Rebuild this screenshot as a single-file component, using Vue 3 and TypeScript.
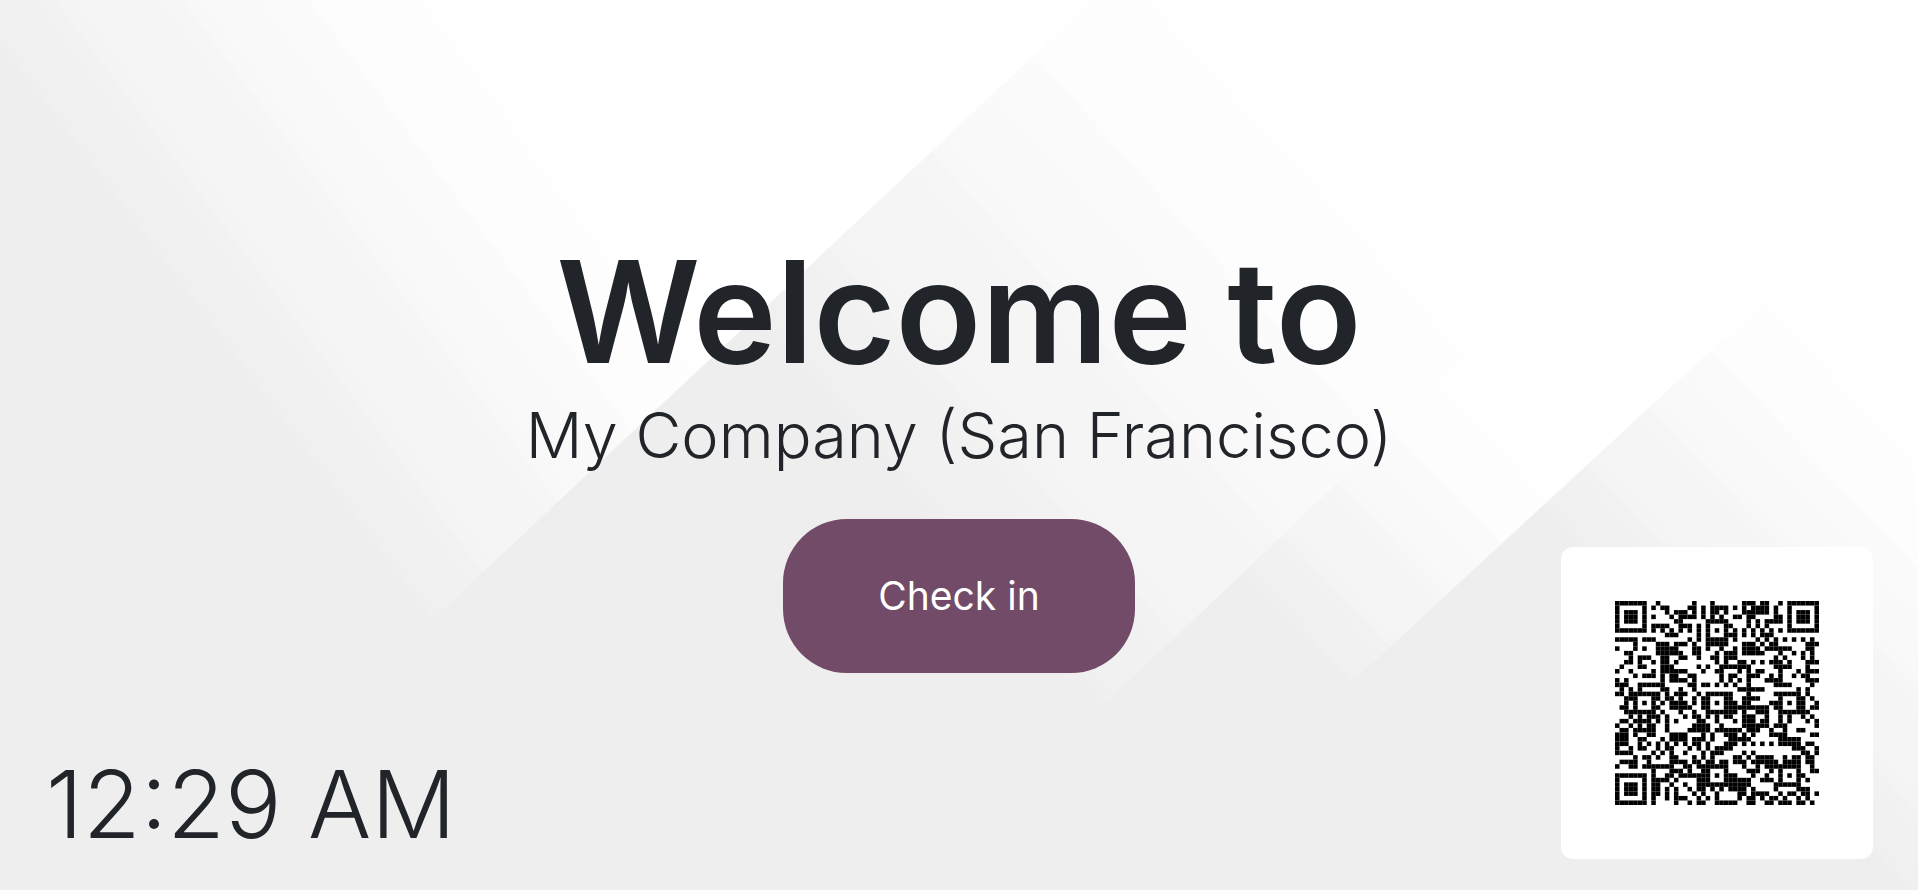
<script setup lang="ts">
interface Cell {
  x: number
  y: number
}

const company = 'My Company (San Francisco)'
const time = '12:29 AM'

const size = 45

// Dark modules of each row, written as single columns and column ranges.
const rows: string[] = [
  '9 17 21 28-30 32-33 36',
  '8 10-11 16-17 19 21-24 26 28 30-33 35',
  '11 13-15 17 19 21-22 24 28-33 35',
  '8 12 14-17 19 21 23 26-27 29-30 35-36',
  '13-14 29 31 33-36',
  '8-11 14-16 18 25 29 31 33',
  '',
  '11-13 18 25-26 28 30 32-34',
  '0-4 7-8 16 18 20-24 26 31 33 35 37 39 41 43',
  '4 9-11 13-15 17 20-24 28-30 32 34-35 42-44',
  '0 4 9-13 17-18 20 23 26 28-31 33-38 42-43',
  '2-3 9-14 17-18 22 24-26 28-32 36 39 41 43',
  '3 5-7 10-11 14-15 18 21-22 24-26 35 37 41 43',
  '2-3 5 8 10-11 13 22 24 27-28 30 32 34-36 38 42-44',
  '1 5 10-12 18 20 23-26 27-29 35-38 42',
  '0 3 8 10-15 19 22-23 27 29 31-32 36 40 42-44',
  '4 7-8 10 12-13 16-17 23 25-26 29-31 34 36 39 41-42',
  '0 2 10 12-15 17 23 25 27 29 33-36 42-44',
  '0-2 5-10 16-17 19-20 22 24 26 29 35-38 43',
  '1 3 5 10-11 14 17 27-32 40 42',
  '0-1 3 9 11 13-15 18 25 29 35 42',
  '2-3 9 11-12 14 17 19 25 28-29 30-31 41 43',
  '2 10 12-15 17 19 25-26 28-29 34-35 41 44',
  '1-2 9 12-16 19 25-33 35 41 43-44',
  '2-3 10 14 17 25-26 28 31-33 41-42',
  '3 5 7-9 11 15 17-18 20 22 24-25 28-30 33 36 38 41 43',
  '1-2 4-7 9 11 13 18-19 22 26 28-30 32-33 36 38 42 44',
  '0 3 5-8 11 17-20 23 28-33 35-37 44',
  '1-2 4-8 11 16-20 22-27 29-31 34 37 40-41',
  '0-2 4 7-8 12-15 19 21 24-26 28 30 34-37 43-44',
  '0-2 5-6 10 12-15 17-19 21 25-29 36-40',
  '0-2 5 7 9 11 13 15 17-18 20 24-26 28 30 32 34 36-40 42-43',
  '0 3 5 9 11-12 16 18 20 22-25 39-41 44',
  '0-3 8 10 12 15 19 21-23 28 30 41-42 44',
  '4 7 9 12-13 17 19 21 26-27 29 31-34 37 39-40 42-43',
  '1-4 7 12-15 17-18 20-21 23-24 26-28 30-35 37-40 42-43',
  '0 3-4 7-12 15-16 18-19 28 31 33-35 43',
  '8 12-14 16 19 29-31 34 43-44',
  '8 11-12 14-19 25-26 30 33 41',
  '8-11 13 18-19 25-29 32-34 42',
  '8-9 12 15 18-19 25-29 35',
  '8-9 11 13 16 18-19 21 23 25-28 30 35 40-42',
  '8-9 11 13 17 19 22 27-28 30-33 36 38-39 41-42 44',
  '8 11 13-15 18 20 22 27 29-30 32 34-35 37 40 42',
  '8 13 16 18-19 22-26 29-30 33-34 36-38 40-41 43',
]

// Finder, alignment and timing patterns are fixed by the symbol's version.
function fixedModule(x: number, y: number): boolean | null {
  for (const [cx, cy] of [[3, 3], [41, 3], [3, 41]]) {
    const d = Math.max(Math.abs(x - cx), Math.abs(y - cy))
    if (d <= 4) return d <= 1 || d === 3
  }
  for (const [cx, cy] of [[22, 6], [6, 22], [22, 22], [38, 22], [22, 38], [38, 38]]) {
    const d = Math.max(Math.abs(x - cx), Math.abs(y - cy))
    if (d <= 2) return d !== 1
  }
  if (x === 6) return y % 2 === 0
  if (y === 6) return x % 2 === 0
  return null
}

function buildCells(): Cell[] {
  const cells: Cell[] = []
  rows.forEach((row, y) => {
    const dark = new Set<number>()
    for (const part of row.split(' ').filter(Boolean)) {
      const [from, to = from] = part.split('-').map(Number)
      for (let x = from; x <= to; x++) dark.add(x)
    }
    for (let x = 0; x < size; x++) {
      if (fixedModule(x, y) ?? dark.has(x)) cells.push({ x, y })
    }
  })
  return cells
}

const cells = buildCells()

// Each facet fades in bands, with a slight step from one band to the next.
const stops = [
  { offset: 0, color: '#eeeeee' },
  { offset: 0.03, color: '#efefef' },
  { offset: 0.03, color: '#f0f0f0' },
  { offset: 0.21, color: '#f2f2f2' },
  { offset: 0.21, color: '#f4f4f4' },
  { offset: 0.48, color: '#f6f6f6' },
  { offset: 0.48, color: '#f8f8f8' },
  { offset: 0.75, color: '#fbfbfb' },
  { offset: 0.75, color: '#fdfdfd' },
  { offset: 1, color: '#fefefe' },
  { offset: 1, color: '#ffffff' },
]

const facets = [
  { id: 'facet-1', x1: -44, y1: 0, x2: 258, y2: -226, points: '0,0 1918,0 1918,890 0,890' },
  { id: 'facet-2', x1: 460, y1: 0, x2: 850, y2: -348, points: '144,890 1093,0 1918,0 1918,890' },
  { id: 'facet-3', x1: 1175, y1: 508, x2: 1378, y2: 313, points: '909,890 1846,0 1918,0 1918,890' },
  { id: 'facet-4', x1: 1540, y1: 510, x2: 1766, y2: 295, points: '1127,890 1918,159 1918,890' },
]
</script>

<template>
  <div class="kiosk">
    <svg class="backdrop" viewBox="0 0 1918 890" preserveAspectRatio="xMidYMid slice" aria-hidden="true">
      <defs>
        <linearGradient
          v-for="f in facets"
          :id="f.id"
          :key="f.id"
          gradientUnits="userSpaceOnUse"
          :x1="f.x1"
          :y1="f.y1"
          :x2="f.x2"
          :y2="f.y2"
        >
          <stop v-for="(s, i) in stops" :key="i" :offset="s.offset" :stop-color="s.color" />
        </linearGradient>
      </defs>
      <polygon v-for="f in facets" :key="f.id" :points="f.points" :fill="`url(#${f.id})`" />
    </svg>

    <time class="clock">{{ time }}</time>

    <main class="welcome">
      <h1 class="title">Welcome to</h1>
      <p class="company">{{ company }}</p>
      <button class="check-in" type="button">Check in</button>
    </main>

    <aside class="qr-card">
      <svg class="qr" viewBox="0 0 45 45" role="img" aria-label="QR code">
        <rect v-for="c in cells" :key="`${c.x}-${c.y}`" :x="c.x" :y="c.y" width="1" height="1" />
      </svg>
    </aside>
  </div>
</template>

<style>
body {
  margin: 0;
}
</style>

<style scoped>
.kiosk {
  position: relative;
  isolation: isolate;
  box-sizing: border-box;
  min-height: 100vh;
  display: grid;
  grid-template-columns: 1fr auto 1fr;
  overflow: hidden;
  background: #eeeeee;
  color: #212529;
  font-family: Inter, "Noto Sans", sans-serif;
}

.backdrop {
  position: absolute;
  inset: 0;
  z-index: -1;
  width: 100%;
  height: 100%;
}

.clock {
  align-self: end;
  margin: 0 0 28px 46px;
  font-size: 94px;
  font-weight: 300;
  line-height: 116px;
  white-space: nowrap;
}

.welcome {
  align-self: center;
  display: flex;
  flex-direction: column;
  align-items: center;
  padding-top: 10px;
  text-align: center;
}

.title {
  margin: 0;
  font-size: 141px;
  font-weight: 600;
  line-height: 170px;
}

.company {
  margin: 0 0 46px;
  font-size: 63px;
  font-weight: 300;
  line-height: 76px;
}

.check-in {
  padding: 53px 95px;
  border: 0;
  border-radius: 64px;
  background: #714b67;
  color: #ffffff;
  font-family: inherit;
  font-size: 39px;
  font-weight: 400;
  line-height: 48px;
  cursor: pointer;
}

.qr-card {
  align-self: end;
  justify-self: end;
  margin: 0 45px 31px 0;
  padding: 54px;
  border-radius: 12px;
  background: #ffffff;
}

.qr {
  display: block;
  width: 204px;
  height: 204px;
  fill: #000000;
}
</style>
